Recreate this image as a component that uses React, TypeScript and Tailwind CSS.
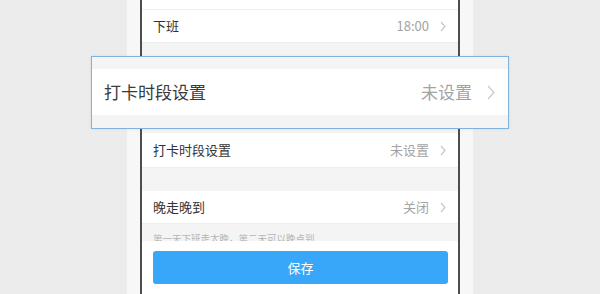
const font = { fontFamily: '"Noto Sans CJK SC", "Noto Sans", sans-serif' }

function Chevron({ size = "sm" }: { size?: "sm" | "lg" }) {
    const w = size === "lg" ? 8 : 6
    const h = size === "lg" ? 15 : 11
    return (
        <svg width={w} height={h} viewBox={`0 0 ${w} ${h}`} className="shrink-0">
            <polyline points={`1,1 ${w - 1},${h / 2} 1,${h - 1}`} fill="none" stroke="#c8c8c8" strokeWidth="1.2" />
        </svg>
    )
}

function Row({ label, value, h = "h-[33px]" }: { label: string; value?: string; h?: string }) {
    return (
        <div className={`flex ${h} items-center justify-between bg-white pl-[11px] pr-[12px] border-b border-[#eeeeee]`}>
            <span className="text-[13px] text-[#333333]">{label}</span>
            {value && (
                <div className="flex items-center gap-[11px]">
                    <span className="text-[13px] text-[#a3a3a3]">{value}</span>
                    <Chevron />
                </div>
            )}
        </div>
    )
}

export default function App() {
    return (
        <div className="relative flex h-[294px] w-[600px] justify-center overflow-hidden bg-[#ececec]" style={font}>
            {/* phone */}
            <div className="flex h-full w-[346px] bg-[#f7f7f7] px-[13px]">
                <div className="flex h-full w-full flex-col border-x-[2.5px] border-[#4d4d4d] bg-[#f4f4f4]">
                    <div className="h-[10px] shrink-0 border-b border-[#eeeeee] bg-white"></div>
                    <Row label="下班" value="18:00" />
                    <div className="h-[90px] shrink-0"></div>
                    <Row label="打卡时段设置" value="未设置" h="h-[35px]" />
                    <div className="h-[23px] shrink-0"></div>
                    <Row label="晚走晚到" value="关闭" />
                    <div className="h-[17px] shrink-0 overflow-hidden pl-[11px] pt-[9px]">
                        <p className="text-[9.5px] leading-[10px] text-[#b4b4b4]">第一天下班走太晚，第二天可以晚点到</p>
                    </div>
                    <div className="flex-1 bg-white pl-[11px] pr-[10px] pt-[10px]">
                        <div className="flex h-[33px] items-center justify-center rounded-[3px] bg-[#38a7f9] text-[13px] text-white">保存</div>
                    </div>
                </div>
            </div>

            {/* magnified row */}
            <div className="absolute left-[91px] top-[56px] flex h-[73px] w-[418px] flex-col border border-[#7fb2df] bg-[#f4f4f4] shadow-[0_0_3px_rgba(0,0,0,0.08)]">
                <div className="mt-[12px] flex h-[46px] items-center justify-between bg-white pl-[12px] pr-[13px]">
                    <span className="text-[17px] text-[#3a3a3a]">打卡时段设置</span>
                    <div className="flex items-center gap-[15px]">
                        <span className="text-[17px] text-[#a3a3a3]">未设置</span>
                        <Chevron size="lg" />
                    </div>
                </div>
            </div>
        </div>
    )
}
